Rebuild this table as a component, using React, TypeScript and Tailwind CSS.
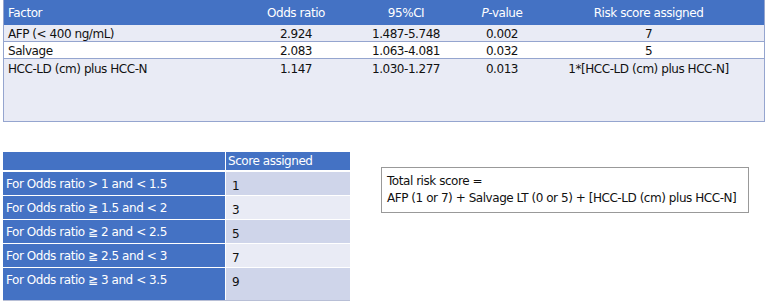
import React from "react";

const factors = [
  { name: "AFP (< 400 ng/mL)", or: "2.924", ci: "1.487-5.748", p: "0.002", score: "7" },
  { name: "Salvage", or: "2.083", ci: "1.063-4.081", p: "0.032", score: "5" },
  { name: "HCC-LD (cm) plus HCC-N", or: "1.147", ci: "1.030-1.277", p: "0.013", score: "1*[HCC-LD (cm) plus HCC-N]" },
];

const scores = [
  { label: "For Odds ratio > 1 and < 1.5", score: "1" },
  { label: "For Odds ratio \u2267 1.5 and < 2", score: "3" },
  { label: "For Odds ratio \u2267 2 and < 2.5", score: "5" },
  { label: "For Odds ratio \u2267 2.5 and < 3", score: "7" },
  { label: "For Odds ratio \u2267 3 and < 3.5", score: "9" },
];

const cols = "grid grid-cols-[247px_90px_130px_62px_1fr]";

export default function App() {
  return (
    <div className="w-[769px] h-[305px] bg-white text-[12px] tracking-[-0.45px] text-[#111] overflow-hidden" style={{ fontFamily: '"DejaVu Sans", Verdana, sans-serif' }}>
      <div className="ml-[3px] w-[762px] border-x border-b border-[#95a5cf]">
        <div className={`${cols} h-[25px] items-center bg-[#4472c4] text-white`}>
          <div className="pl-[4px]">Factor</div>
          <div className="text-center">Odds ratio</div>
          <div className="text-center">95%CI</div>
          <div className="text-center">
            <span className="italic">P</span>-value
          </div>
          <div className="text-center">Risk score assigned</div>
        </div>
        {factors.map((f, i) => (
          <div
            key={f.name}
            className={`${cols} ${i === 2 ? "h-[62px] items-start pt-[1px]" : "h-[17px] items-center border-b border-[#95a5cf]"} ${i === 1 ? "bg-white" : "bg-[#e9ebf5]"}`}
          >
            <div className="pl-[4px]">{f.name}</div>
            <div className="text-center">{f.or}</div>
            <div className="text-center">{f.ci}</div>
            <div className="text-center">{f.p}</div>
            <div className="text-center">{f.score}</div>
          </div>
        ))}
      </div>

      <div className="flex items-start mt-[30px]">
        <div className="ml-[3px] w-[347px] border-b border-[#b8bfd6]">
          <div className="grid grid-cols-[223px_1fr] h-[20px] border-b-2 border-white">
            <div className="bg-[#4472c4] border-r border-white" />
            <div className="bg-[#4472c4] text-white pl-[2px] flex items-center">Score assigned</div>
          </div>
          {scores.map((s, i) => (
            <div
              key={s.label}
              className={`grid grid-cols-[223px_1fr] ${i === 4 ? "h-[32px]" : "h-[24px] border-b-2 border-white"}`}
            >
              <div className="bg-[#4472c4] text-white pl-[3px] pt-[3px] border-r border-white">{s.label}</div>
              <div className={`${i % 2 === 0 ? "bg-[#cfd5ea]" : "bg-[#e9ebf5]"} pl-[6px] pt-[5px]`}>{s.score}</div>
            </div>
          ))}
        </div>

        <div className="ml-[31px] mt-[15px] w-[368px] h-[46px] border border-[#999] px-[5px] pt-[5px] leading-[17px] whitespace-nowrap">
          <div>Total risk score =</div>
          <div>AFP (1 or 7) + Salvage LT (0 or 5) + [HCC-LD (cm) plus HCC-N]</div>
        </div>
      </div>
    </div>
  );
}
